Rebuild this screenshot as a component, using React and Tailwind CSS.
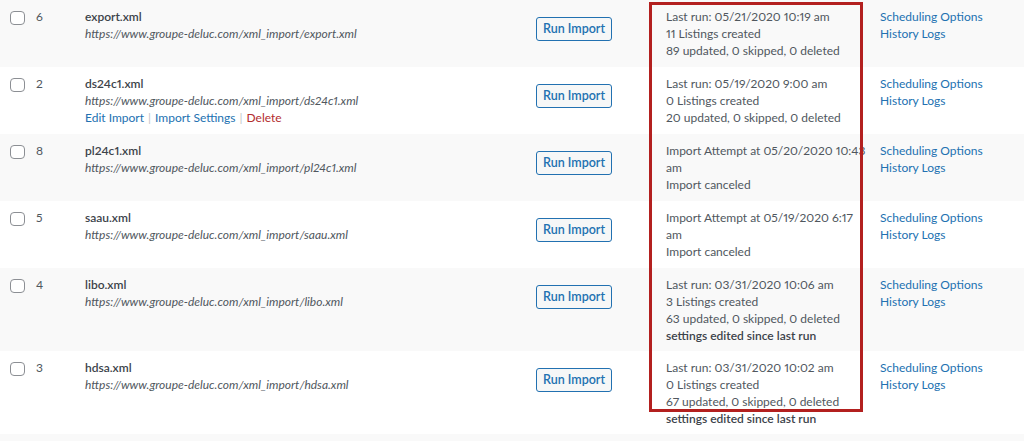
import React from "react";

const rows = [
  {
    id: 6,
    title: "export.xml",
    url: "https://www.groupe-deluc.com/xml_import/export.xml",
    status: ["Last run: 05/21/2020 10:19 am", "11 Listings created", "89 updated, 0 skipped, 0 deleted"],
  },
  {
    id: 2,
    title: "ds24c1.xml",
    url: "https://www.groupe-deluc.com/xml_import/ds24c1.xml",
    actions: true,
    status: ["Last run: 05/19/2020 9:00 am", "0 Listings created", "20 updated, 0 skipped, 0 deleted"],
  },
  {
    id: 8,
    title: "pl24c1.xml",
    url: "https://www.groupe-deluc.com/xml_import/pl24c1.xml",
    status: ["Import Attempt at 05/20/2020 10:43", "am", "Import canceled"],
  },
  {
    id: 5,
    title: "saau.xml",
    url: "https://www.groupe-deluc.com/xml_import/saau.xml",
    status: ["Import Attempt at 05/19/2020 6:17", "am", "Import canceled"],
  },
  {
    id: 4,
    title: "libo.xml",
    url: "https://www.groupe-deluc.com/xml_import/libo.xml",
    status: ["Last run: 03/31/2020 10:06 am", "3 Listings created", "63 updated, 0 skipped, 0 deleted"],
    edited: true,
  },
  {
    id: 3,
    title: "hdsa.xml",
    url: "https://www.groupe-deluc.com/xml_import/hdsa.xml",
    status: ["Last run: 03/31/2020 10:02 am", "0 Listings created", "67 updated, 0 skipped, 0 deleted"],
    edited: true,
  },
];

function Row({ row, striped }) {
  return (
    <div
      className={`grid grid-cols-[36px_49px_451px_130px_214px_1fr] pt-2 ${row.edited ? "pb-[7px]" : "pb-2"} ${
        striped ? "bg-[#f9f9f9]" : "bg-white"
      }`}
    >
      <div className="pl-[10px] pt-[3px]">
        <div className="w-[15px] h-[14px] rounded-[4px] border border-[#8c8f94] bg-white" />
      </div>
      <div className="text-[#50575e]">{row.id}</div>
      <div className="whitespace-nowrap">
        <div className="font-semibold text-[#3c434a]">{row.title}</div>
        <div className="italic text-[#50575e]">{row.url}</div>
        {row.actions && (
          <div className="flex items-center text-[#2271b1]">
            <span>Edit Import</span>
            <span className="px-[4px] text-[#c3c4c7]">|</span>
            <span>Import Settings</span>
            <span className="px-[4px] text-[#c3c4c7]">|</span>
            <span className="text-[#b32d2e]">Delete</span>
          </div>
        )}
      </div>
      <div>
        <button className="mt-[9px] h-[24px] w-[76px] rounded-[3px] border border-[#2271b1] bg-[#f6f7f7] font-semibold text-[#2271b1] text-[12.5px] leading-[22px] whitespace-nowrap">
          Run Import
        </button>
      </div>
      <div className="text-[#50575e] whitespace-nowrap">
        {row.status.map((line, i) => (
          <div key={i}>{line}</div>
        ))}
        {row.edited && <div className="font-semibold text-[#3c434a]">settings edited since last run</div>}
      </div>
      <div className="text-[#2271b1] whitespace-nowrap">
        <div>Scheduling Options</div>
        <div>History Logs</div>
      </div>
    </div>
  );
}

export default function App() {
  return (
    <div
      className="relative w-[1024px] h-[441px] overflow-hidden bg-[#f9f9f9] text-[12px] leading-[17px] proportional-nums"
      style={{ fontFamily: 'Lato, "Noto Sans", sans-serif' }}
    >
      {rows.map((row, i) => (
        <Row key={row.id} row={row} striped={i % 2 === 0} />
      ))}
      {/* highlight frame around the status column */}
      <div className="absolute left-[649px] top-[2px] w-[214px] h-[410px] border-[3px] border-[#b3201f] pointer-events-none" />
    </div>
  );
}
